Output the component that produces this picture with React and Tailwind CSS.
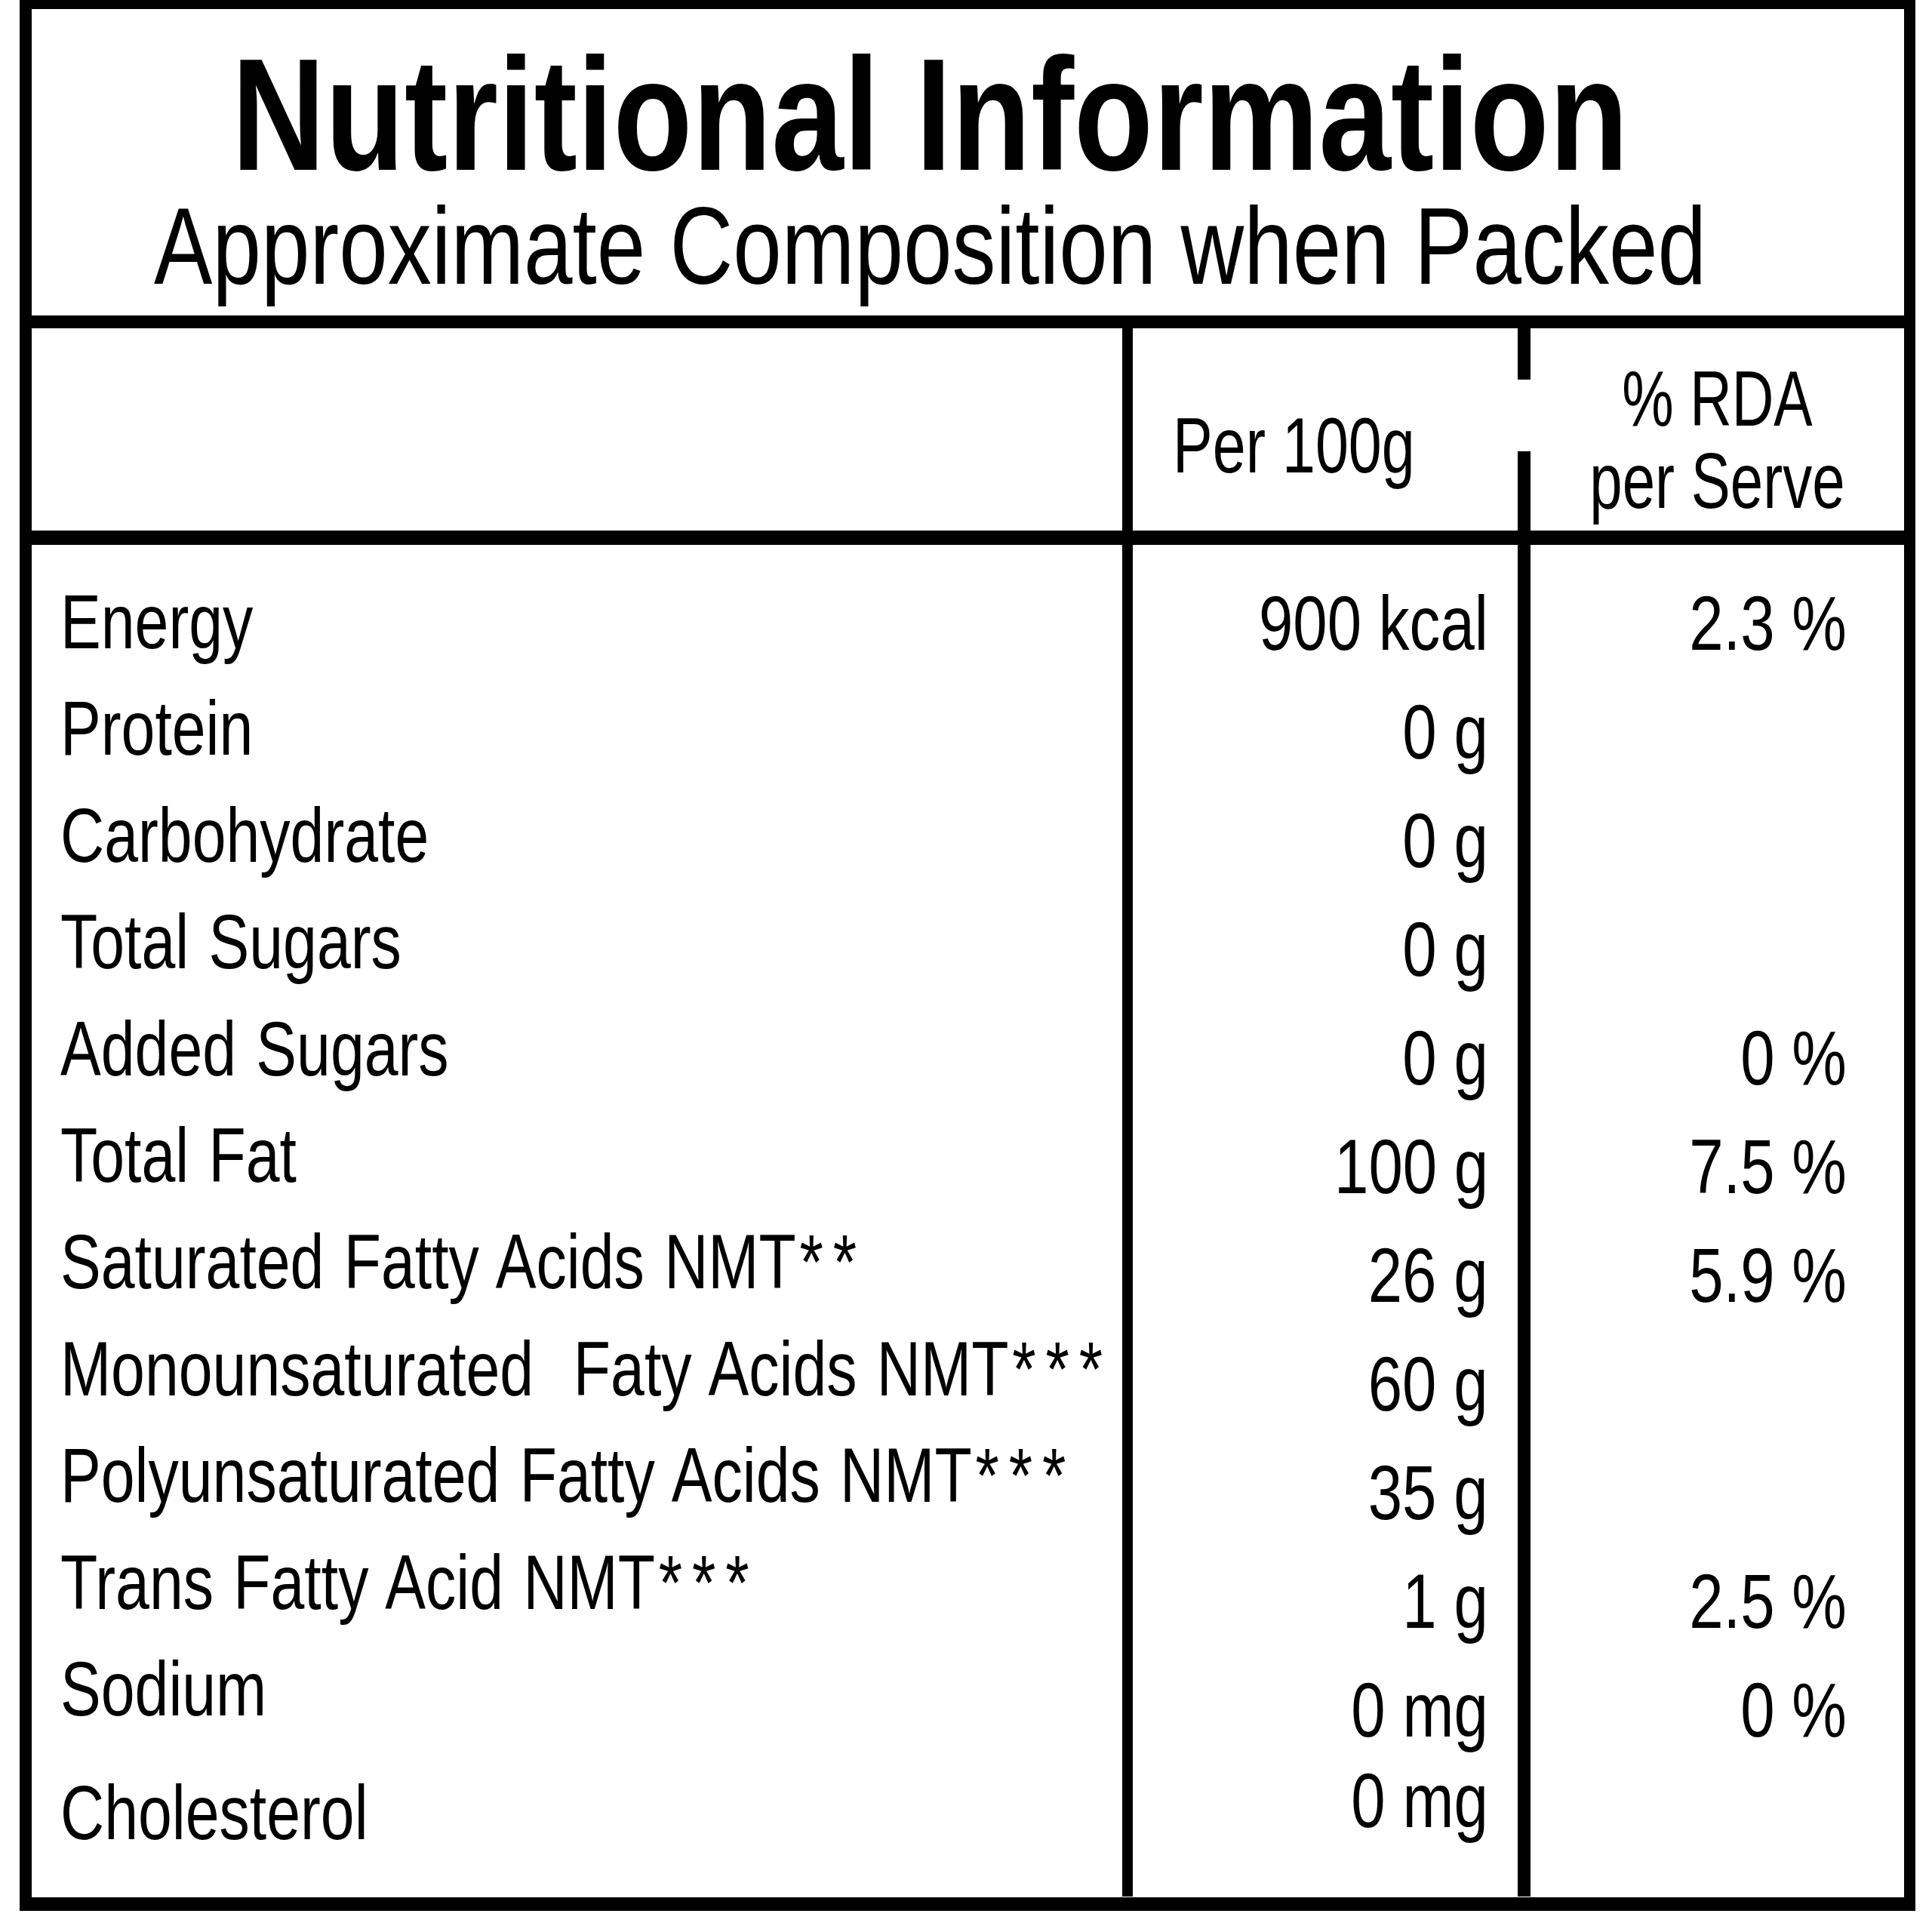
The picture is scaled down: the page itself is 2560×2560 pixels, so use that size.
const labels = [
  ['Energy'],
  ['Protein'],
  ['Carbohydrate'],
  ['Total Sugars'],
  ['Added Sugars'],
  ['Total Fat'],
  ['Saturated Fatty Acids NMT', '**'],
  ['Monounsaturated\u00a0 Faty Acids NMT', '***'],
  ['Polyunsaturated Fatty Acids NMT', '***'],
  ['Trans Fatty Acid NMT', '***'],
  ['Sodium'],
];

const per100 = ['900 kcal', '0 g', '0 g', '0 g', '0 g', '100 g', '26 g', '60 g', '35 g', '1 g', '0 mg'];
const rda = ['2.3 %', '', '', '', '0 %', '7.5 %', '5.9 %', '', '', '2.5 %', '0 %'];

const font = { fontFamily: '"Liberation Sans", Arial, sans-serif' };

// the label uses a condensed face; squeeze Liberation Sans to match
const Narrow = ({ children, className = '' }) => (
  <span className={`inline-block whitespace-nowrap ${className}`}>{children}</span>
);

export default function App() {
  return (
    <div className="min-h-[2560px] w-[2560px] bg-white text-black" style={font}>
      <div className="ml-[26px] h-[2532px] w-[2512px] border-t-[12px] border-r-[15px] border-b-[18px] border-l-[16px] border-black">
        <div className="flex h-[423px] flex-col items-center border-b-[17px] border-black pt-[41px] pr-[100px]">
          <h1 className="text-[212px] leading-[198px] font-bold">
            <Narrow className="origin-center scale-x-[0.81]">Nutritional Information</Narrow>
          </h1>
          <p className="mt-[3px] text-[145px] leading-none">
            <Narrow className="origin-center scale-x-[0.8]">Approximate Composition when Packed</Narrow>
          </p>
        </div>

        <div className="grid h-[287px] grid-cols-[1445px_524px_1fr] border-b-[19px] border-black">
          <div />
          <div className="border-l-[14px] border-black pt-[103px] pl-[53px] text-[104px] leading-none">
            <Narrow className="origin-left scale-x-[0.76]">Per 100g</Narrow>
          </div>
          <div className="relative flex flex-col items-center border-l-[17px] border-black pt-[39px] text-[104px] leading-[109px]">
            <div className="absolute top-[68px] left-[-17px] h-[95px] w-[17px] bg-white" />
            <Narrow className="origin-center scale-x-[0.74]">% RDA</Narrow>
            <Narrow className="origin-center scale-x-[0.75]">per Serve</Narrow>
          </div>
        </div>

        <div className="grid h-[1791px] grid-cols-[1445px_524px_1fr]">
          <div className="flex flex-col pt-[32px] pl-[38px] text-[102px] leading-[141.4px] whitespace-nowrap [word-spacing:5px]">
            {labels.map(([l, stars]) => (
              <div key={l}>
                <Narrow className="origin-left scale-x-[0.79]">
                  {l}
                  {stars && <span className="pl-[0.06em] tracking-[0.16em]">{stars}</span>}
                </Narrow>
              </div>
            ))}
            <div className="mt-[23px]">
              <Narrow className="origin-left scale-x-[0.79]">Cholesterol</Narrow>
            </div>
          </div>
          <div className="flex flex-col border-l-[14px] border-black pt-[32px] pr-[39px] text-right text-[102px] leading-[144px] whitespace-nowrap">
            {per100.map((v, i) => (
              <div key={i}>
                <Narrow className="origin-right scale-x-[0.8]">{v}</Narrow>
              </div>
            ))}
            <div className="-mt-[24px]">
              <Narrow className="origin-right scale-x-[0.8]">0 mg</Narrow>
            </div>
          </div>
          <div className="flex flex-col border-l-[17px] border-black pt-[32px] pr-[76px] text-right text-[102px] leading-[144px] whitespace-nowrap">
            {rda.map((v, i) => (
              <div key={i} className="h-[144px]">
                <Narrow className="origin-right scale-x-[0.8]">{v}</Narrow>
              </div>
            ))}
          </div>
        </div>
      </div>
    </div>
  );
}
